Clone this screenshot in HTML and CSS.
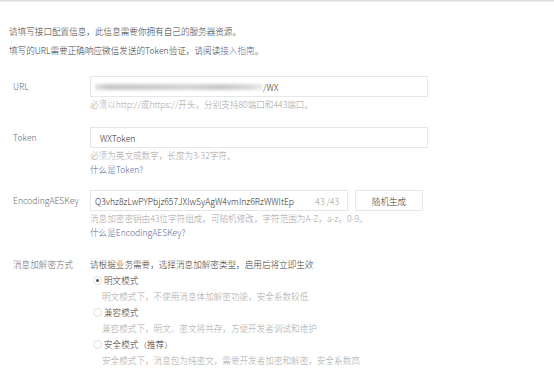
FILE: index.html
```html
<!DOCTYPE html>
<html lang="zh-CN">
<head>
<meta charset="utf-8">
<title>服务器配置</title>
<link rel="stylesheet" href="styles.css">
</head>
<body>
<div class="topline"></div>
<div class="page">
  <div class="intro">
    <p>请填写接口配置信息，此信息需要你拥有自己的服务器资源。</p>
    <p>填写的URL需要正确响应微信发送的Token验证，请阅读<a class="link" href="#">接入指南</a>。</p>
  </div>
  <div class="form">
    <div class="row row-url">
      <div class="label">URL</div>
      <div class="field">
        <div class="input input-wide"><span class="blur"></span><span class="value">/WX</span></div>
        <p class="help">必须以http://或https://开头，分别支持80端口和443端口。</p>
      </div>
    </div>
    <div class="row row-token">
      <div class="label">Token</div>
      <div class="field">
        <div class="input input-wide"><span class="value">WXToken</span></div>
        <p class="help">必须为英文或数字，长度为3-32字符。</p>
        <p class="help"><a class="link" href="#">什么是Token?</a></p>
      </div>
    </div>
    <div class="row row-aes">
      <div class="label">EncodingAESKey</div>
      <div class="field">
        <div class="aes-line">
          <div class="input input-aes"><span class="value">Q3vhz8zLwPYPbjz657JXlwSyAgW4vmInz6RzWWltEp</span><span class="counter">43 /43</span></div>
          <div class="btn">随机生成</div>
        </div>
        <p class="help">消息加密密钥由43位字符组成，可随机修改，字符范围为A-Z，a-z，0-9。</p>
        <p class="help"><a class="link" href="#">什么是EncodingAESKey?</a></p>
      </div>
    </div>
    <div class="row row-mode">
      <div class="label label-mode">消息加解密方式</div>
      <div class="field mode">
        <p class="mode-head">请根据业务需要，选择消息加解密类型，启用后将立即生效</p>
        <div class="option"><span class="radio checked"></span><span>明文模式</span></div>
        <p class="desc">明文模式下，不使用消息体加解密功能，安全系数较低</p>
        <div class="option"><span class="radio"></span><span>兼容模式</span></div>
        <p class="desc">兼容模式下，明文、密文将共存，方便开发者调试和维护</p>
        <div class="option"><span class="radio"></span><span>安全模式（推荐）</span></div>
        <p class="desc">安全模式下，消息包为纯密文，需要开发者加密和解密，安全系数高</p>
      </div>
    </div>
  </div>
</div>
</body>
</html>
```

FILE: styles.css
```css
body {
  margin: 0;
  background: #fff;
  color: #3a3a3a;
  font-family: "Noto Sans CJK SC", "Noto Sans", sans-serif;
  font-size: 8.6px;
  font-weight: 300;
}

p { margin: 0; }

.topline {
  height: 2px;
  background: linear-gradient(#d9d9d9, #f3f3f3);
}

.intro {
  padding: 20px 0 0 9px;
  line-height: 19px;
}

.link {
  color: #576b95;
  text-decoration: none;
}

.form {
  margin-top: 16px;
}

.row {
  display: flex;
}

.row-url { margin-bottom: 16px; }
.row-token { margin-bottom: 14px; }
.row-aes { margin-bottom: 17px; }

.label {
  width: 90px;
  box-sizing: border-box;
  padding-left: 13px;
  line-height: 21px;
  color: #6a6a6a;
  flex: none;
}

.label-mode { line-height: 16px; }

.input {
  height: 21px;
  box-sizing: border-box;
  border: 1px solid #e7e7eb;
  padding: 0 9px;
  display: flex;
  align-items: center;
  color: #2a2a2a;
}

.input-wide { width: 338px; }

.blur {
  display: inline-block;
  width: 168px;
  height: 6px;
  margin-left: -5px;
  background: linear-gradient(90deg, #e2e2e2 0%, #c9c9c9 8%, #cfcfcf 40%, #d6d6d6 55%, #c8c8c8 75%, #d9d9d9 92%, #ededed 100%);
  filter: blur(1.5px);
}

.input-aes {
  width: 258px;
  padding: 0 8px 0 4px;
  justify-content: space-between;
}

.counter {
  color: #9a9a9a;
}

.aes-line {
  display: flex;
  gap: 7px;
}

.btn {
  width: 68px;
  height: 21px;
  box-sizing: border-box;
  border: 1px solid #e7e7eb;
  display: flex;
  align-items: center;
  justify-content: center;
  color: #353535;
}

.help {
  line-height: 14px;
  color: #a3a3a3;
}

.mode { line-height: 16px; }

.option {
  display: flex;
  align-items: center;
  height: 16px;
}

.radio {
  width: 7px;
  height: 7px;
  margin-left: 3px;
  margin-right: 2px;
  border: 1px solid #e2e2e2;
  border-radius: 50%;
  position: relative;
  flex: none;
}

.radio.checked::after {
  content: "";
  position: absolute;
  left: 2px;
  top: 2px;
  width: 3px;
  height: 3px;
  border-radius: 50%;
  background: #555;
}

.desc {
  padding-left: 12px;
  color: #a8a8a8;
}
```
